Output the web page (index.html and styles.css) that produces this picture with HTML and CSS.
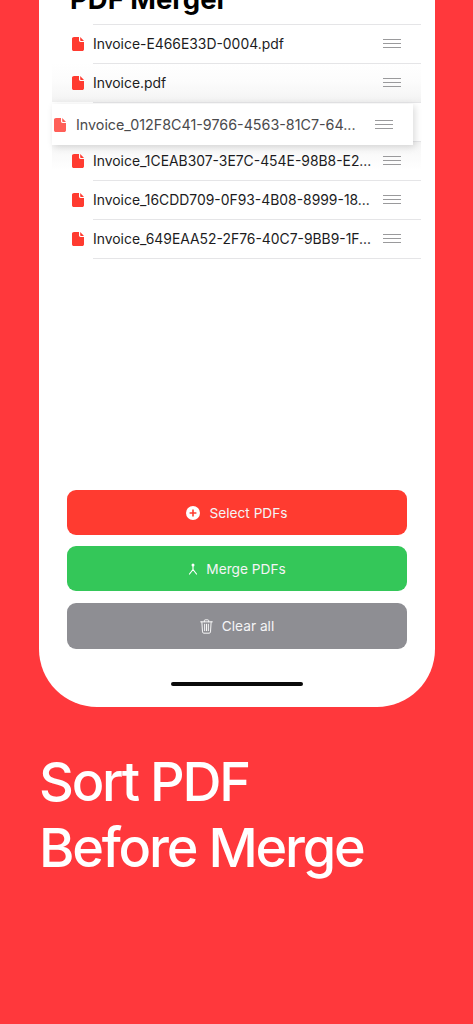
FILE: index.html
```html
<!DOCTYPE html>
<html lang="en">
<head>
<meta charset="utf-8">
<title>PDF Merger</title>
<link rel="stylesheet" href="styles.css">
</head>
<body>
<main class="phone">
  <h1 class="title">PDF Merger</h1>
  <div class="list">
    <div class="row">
      <svg class="file" viewBox="0 0 12 14"><path d="M2 0h5v3.6c0 .8.6 1.4 1.4 1.4H12v7.2c0 1-.8 1.8-1.8 1.8H1.8C.8 14 0 13.2 0 12.2V1.8C0 .8.9 0 2 0zM8.2 0 12 3.9H8.9c-.4 0-.7-.3-.7-.7z"/></svg>
      <span class="name">Invoice-E466E33D-0004.pdf</span>
      <span class="handle"><i></i><i></i><i></i></span>
    </div>
    <div class="row shade-top">
      <svg class="file" viewBox="0 0 12 14"><path d="M2 0h5v3.6c0 .8.6 1.4 1.4 1.4H12v7.2c0 1-.8 1.8-1.8 1.8H1.8C.8 14 0 13.2 0 12.2V1.8C0 .8.9 0 2 0zM8.2 0 12 3.9H8.9c-.4 0-.7-.3-.7-.7z"/></svg>
      <span class="name">Invoice.pdf</span>
      <span class="handle"><i></i><i></i><i></i></span>
    </div>
    <div class="row"></div>
    <div class="row shade-bottom">
      <svg class="file" viewBox="0 0 12 14"><path d="M2 0h5v3.6c0 .8.6 1.4 1.4 1.4H12v7.2c0 1-.8 1.8-1.8 1.8H1.8C.8 14 0 13.2 0 12.2V1.8C0 .8.9 0 2 0zM8.2 0 12 3.9H8.9c-.4 0-.7-.3-.7-.7z"/></svg>
      <span class="name">Invoice_1CEAB307-3E7C-454E-98B8-E2...</span>
      <span class="handle"><i></i><i></i><i></i></span>
    </div>
    <div class="row">
      <svg class="file" viewBox="0 0 12 14"><path d="M2 0h5v3.6c0 .8.6 1.4 1.4 1.4H12v7.2c0 1-.8 1.8-1.8 1.8H1.8C.8 14 0 13.2 0 12.2V1.8C0 .8.9 0 2 0zM8.2 0 12 3.9H8.9c-.4 0-.7-.3-.7-.7z"/></svg>
      <span class="name">Invoice_16CDD709-0F93-4B08-8999-18...</span>
      <span class="handle"><i></i><i></i><i></i></span>
    </div>
    <div class="row last">
      <svg class="file" viewBox="0 0 12 14"><path d="M2 0h5v3.6c0 .8.6 1.4 1.4 1.4H12v7.2c0 1-.8 1.8-1.8 1.8H1.8C.8 14 0 13.2 0 12.2V1.8C0 .8.9 0 2 0zM8.2 0 12 3.9H8.9c-.4 0-.7-.3-.7-.7z"/></svg>
      <span class="name">Invoice_649EAA52-2F76-40C7-9BB9-1F...</span>
      <span class="handle"><i></i><i></i><i></i></span>
    </div>
    <div class="row dragged">
      <svg class="file" viewBox="0 0 12 14"><path d="M2 0h5v3.6c0 .8.6 1.4 1.4 1.4H12v7.2c0 1-.8 1.8-1.8 1.8H1.8C.8 14 0 13.2 0 12.2V1.8C0 .8.9 0 2 0zM8.2 0 12 3.9H8.9c-.4 0-.7-.3-.7-.7z"/></svg>
      <span class="name">Invoice_012F8C41-9766-4563-81C7-64...</span>
      <span class="handle"><i></i><i></i><i></i></span>
    </div>
  </div>
  <div class="actions">
    <button class="btn red">
      <svg class="ic" viewBox="0 0 14 14"><path fill="#fff" fill-rule="evenodd" d="M7 0a7 7 0 1 1 0 14A7 7 0 0 1 7 0zM6.2 3.6v2.6H3.6v1.6h2.6v2.6h1.6V7.800h2.600V6.200H7.800V3.600z"/></svg>
      Select PDFs
    </button>
    <button class="btn green">
      <svg class="ic small" viewBox="0 0 10 12"><path fill="none" stroke="#fff" stroke-width="1.200" stroke-linecap="round" d="M5 2v4.500M5 6.500 1.500 11M5 6.500 8.500 11"/><circle cx="5" cy="2" r="1.500" fill="#fff"/></svg>
      Merge PDFs
    </button>
    <button class="btn gray">
      <svg class="ic trash" viewBox="0 0 14 16"><path fill="none" stroke="#fff" stroke-width="1" stroke-linecap="round" d="M.7 3h12.600M4.600 3V1.800c0-.6.4-1 1-1h2.800c.6 0 1 .4 1 1V3M2 3l.7 10.800c0 .8.6 1.400 1.400 1.400h5.800c.8 0 1.400-.6 1.400-1.400L12 3M5 5.500v7M7 5.500v7M9 5.500v7"/></svg>
      Clear all
    </button>
  </div>
  <div class="home"></div>
</main>
<h2 class="headline">Sort PDF<br>Before Merge</h2>
</body>
</html>
```
FILE: styles.css
```css
* { box-sizing: border-box; }
html, body { height: 100%; }
body {
  margin: 0;
  height: 1024px;
  overflow: hidden;
  background: #ff383c;
  font-family: Inter, "Liberation Sans", sans-serif;
}
.phone {
  position: relative;
  width: 396px;
  height: 727px;
  margin: -20px 0 0 39px;
  background: #fff;
  border-radius: 0 0 58px 58px;
  display: flex;
  flex-direction: column;
}
.title {
  margin: 0;
  height: 44px;
  padding: 4px 0 0 31px;
  font-size: 27.500px;
  line-height: 30px;
  font-weight: 700;
  color: #000;
}
.list {
  position: relative;
  display: flex;
  flex-direction: column;
}
.row {
  position: relative;
  display: flex;
  align-items: center;
  height: 39px;
  padding: 0 34px 0 33px;
}
.row::before {
  content: "";
  position: absolute;
  left: 54px;
  right: 14px;
  top: 0;
  height: 1px;
  background: #e5e5e7;
}
.last::after {
  content: "";
  position: absolute;
  left: 54px;
  right: 14px;
  bottom: -1px;
  height: 1px;
  background: #e5e5e7;
}
.shade-top {
  background: linear-gradient(#fff 0, #fcfcfc 45%, #f6f6f6 85%, #efefef 100%) no-repeat 13px 0 / 369px 100%;
}
.shade-bottom {
  background: linear-gradient(#f2f2f2 0, #f7f7f7 15%, #fff 75%) no-repeat 13px 0 / 369px 100%;
}
.file {
  width: 12px;
  height: 14px;
  flex: none;
  fill: #ff3b30;
}
.name {
  flex: 1;
  margin-left: 9px;
  font-size: 13.900px;
  color: #1c1c1e;
  white-space: nowrap;
  overflow: hidden;
}
.handle {
  flex: none;
  width: 18px;
  display: flex;
  flex-direction: column;
  gap: 2.500px;
}
.handle i {
  display: block;
  height: 1.500px;
  background: #9a9a9c;
}
.dragged {
  position: absolute;
  left: 13px;
  top: 80px;
  width: 361px;
  height: 41px;
  padding: 0 20px 0 2px;
  background: #fff;
  box-shadow: 2px 2px 7px rgba(0, 0, 0, 0.14);
}
.dragged::before { content: none; }
.dragged .file { fill: #ff5f58; }
.dragged .name { margin-left: 10px; font-size: 14.300px; color: #4a4a4c; }
.actions {
  margin-top: auto;
  padding: 0 28px;
  display: flex;
  flex-direction: column;
  gap: 11px;
}
.btn {
  display: flex;
  align-items: center;
  justify-content: center;
  gap: 9px;
  width: 100%;
  height: 45px;
  border: 0;
  border-radius: 9px;
  color: #f4f4f6;
  font-family: inherit;
  font-size: 13.700px;
}
.red { background: #ff3b30; }
.green { background: #34c759; }
.gray { background: #8e8e93; height: 46px; margin-top: 1px; }
.ic { width: 14px; height: 14px; flex: none; }
.ic.small { width: 10px; height: 12px; margin-right: -1px; }
.ic.trash { width: 13px; height: 15px; }
.home {
  width: 132px;
  height: 4px;
  margin: 33px auto 21px;
  background: #0a0a0a;
  border-radius: 2px;
}
.headline {
  margin: 42px 0 0 39px;
  font-size: 54px;
  line-height: 66px;
  font-weight: 500;
  letter-spacing: -2.200px;
  color: #fff;
}
```
